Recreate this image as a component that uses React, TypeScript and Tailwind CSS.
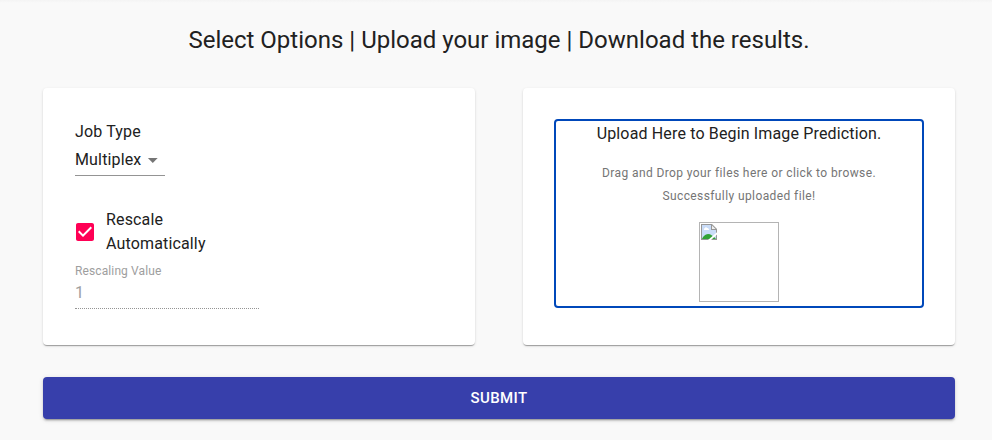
const cardClass =
  'h-[257px] w-[432px] rounded bg-white p-8 shadow-[0px_2px_1px_-1px_rgba(0,0,0,0.2),0px_1px_1px_0px_rgba(0,0,0,0.14),0px_1px_3px_0px_rgba(0,0,0,0.12)]';

function BrokenImage() {
  return (
    <div className="mt-[14px] h-20 w-20 border border-[#b4b4b4] p-px">
      <svg width="16" height="16" viewBox="0 0 16 16">
        <path d="M0 0h11l5 5v11H0z" fill="#979797" />
        <path d="M1 1h9v5h5v9H1z" fill="#c9dcf8" />
        <path d="M11 1.400L14.600 5H11z" fill="#f0f0f0" />
        <path d="M3 6V5c0-1 1-1 1-1 0-1 2-1 2 0 1 0 2 .5 2 2z" fill="#fff" />
        <path d="M1 15c.5-2 3.500-5 6-5 2.500 0 5.500 2 8 5z" fill="#31a336" />
        <path d="M16 8.200v2.300L10 16H7l9-7.800z" fill="#fff" />
      </svg>
    </div>
  );
}

function OptionsCard() {
  return (
    <section className={cardClass}>
      <div className="text-base leading-6 tracking-[0.00938em]">Job Type</div>
      <div className="flex h-8 w-[90px] items-start border-b border-[#949494] pt-1.5">
        <span className="text-base leading-[19px] tracking-[0.00938em]">Multiplex</span>
        <svg className="-mt-0.5 ml-auto" width="24" height="24" viewBox="0 0 24 24" fill="#757575">
          <path d="M7 10l5 5 5-5z" />
        </svg>
      </div>
      <label className="mt-8 -ml-0.5 flex items-center gap-[9px]">
        <svg width="24" height="24" viewBox="0 0 24 24" fill="#ff0055">
          <path d="M19 3H5c-1.11 0-2 .9-2 2v14c0 1.1.89 2 2 2h14c1.11 0 2-.9 2-2V5c0-1.1-.89-2-2-2zm-9 14l-5-5 1.41-1.41L10 14.17l7.59-7.59L19 8l-9 9z" />
        </svg>
        <span className="w-[110px] text-base leading-6 tracking-[0.00938em]">Rescale Automatically</span>
      </label>
      <div className="mt-2 text-xs leading-[14px] tracking-[0.00938em] text-[#9e9e9e]">Rescaling Value</div>
      <div className="flex h-[31px] w-[184px] items-start border-b border-dotted border-[#949494] pt-[5px] text-base leading-[19px] text-[#9e9e9e]">
        1
      </div>
    </section>
  );
}

function UploadCard() {
  return (
    <section className={cardClass}>
      <div className="-m-px flex h-[189px] flex-col items-center rounded border-2 border-[#0048ba] pt-px text-center">
        <div className="text-base leading-6 tracking-[0.00938em]">Upload Here to Begin Image Prediction.</div>
        <div className="mt-4 text-xs leading-[23px] tracking-[0.0333em] text-[#757575]">
          <p>Drag and Drop your files here or click to browse.</p>
          <p>Successfully uploaded file!</p>
        </div>
        <BrokenImage />
      </div>
    </section>
  );
}

export default function App() {
  return (
    <main className="h-[440px] overflow-hidden bg-[#f9f9f9] pr-[37px] pl-[43px] font-[Roboto,sans-serif] text-[#212121]">
      <div className="-mr-[37px] -ml-[43px] h-[3px] bg-linear-to-b from-[#f4f4f4] to-[#f9f9f9]" />
      <h1 className="mt-[21px] text-center text-2xl leading-8">
        Select Options | Upload your image | Download the results.
      </h1>
      <div className="mt-8 flex gap-12">
        <OptionsCard />
        <UploadCard />
      </div>
      <button className="mt-8 h-[42px] w-[912px] rounded bg-[#373fab] text-[15px] leading-[26px] font-medium tracking-[0.02857em] text-white shadow-[0px_3px_1px_-2px_rgba(0,0,0,0.2),0px_2px_2px_0px_rgba(0,0,0,0.14),0px_1px_5px_0px_rgba(0,0,0,0.12)]">
        SUBMIT
      </button>
    </main>
  );
}
